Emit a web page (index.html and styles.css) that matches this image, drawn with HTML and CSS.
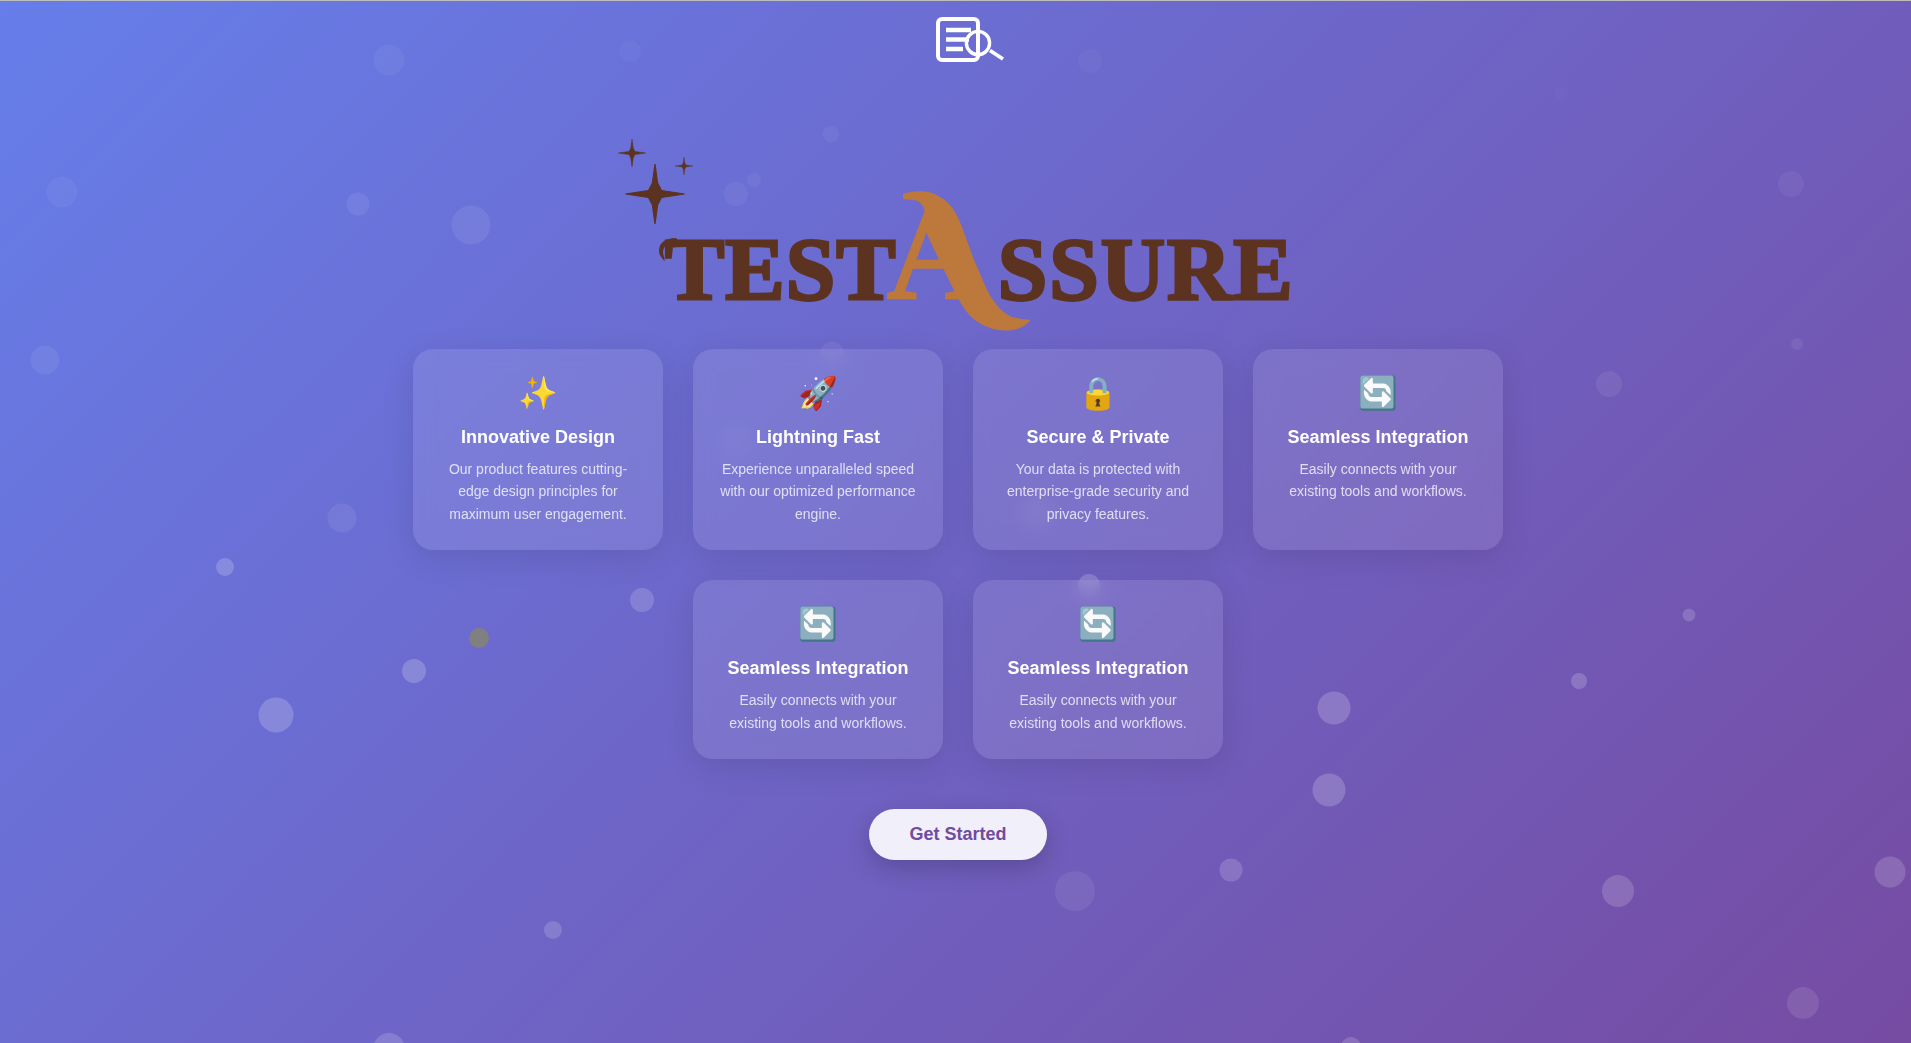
FILE: index.html
```html
<!DOCTYPE html>
<html lang="en">
<head>
<meta charset="utf-8">
<title>TestAssure</title>
<link rel="stylesheet" href="styles.css">
</head>
<body>
<svg class="bubbles" viewBox="0 0 1911 1043" aria-hidden="true">
  <g class="b02"><circle cx="1561" cy="93" r="7"/></g>
  <g class="b04"><circle cx="630" cy="51" r="11"/><circle cx="1090" cy="61" r="12"/></g>
  <g class="b06"><circle cx="389" cy="60" r="15.5"/><circle cx="62" cy="192" r="15.5"/><circle cx="736" cy="194" r="12"/><circle cx="831" cy="134" r="8.5"/><circle cx="754" cy="180" r="7"/><circle cx="1791" cy="184" r="13"/></g>
  <g class="b08"><circle cx="358" cy="204" r="11.5"/><circle cx="471" cy="225" r="19.5"/><circle cx="45" cy="360" r="14.5"/><circle cx="342" cy="518" r="14.5"/><circle cx="1797" cy="344" r="6"/><circle cx="1609" cy="384" r="13"/><circle cx="1075" cy="891" r="20"/><circle cx="737" cy="440" r="12"/><circle cx="1036" cy="512" r="14"/><circle cx="832" cy="354" r="12"/></g>
  <g class="b12"><circle cx="1803" cy="1003" r="16"/></g>
  <g class="b18"><circle cx="642" cy="600" r="12"/><circle cx="553" cy="930" r="9"/><circle cx="1618" cy="891" r="16"/><circle cx="1890" cy="872" r="15.5"/><circle cx="1231" cy="870" r="11.5"/><circle cx="1351" cy="1047" r="10"/><circle cx="389" cy="1049" r="16"/><circle cx="1689" cy="615" r="6.5"/></g>
  <g class="b20"><circle cx="225" cy="567" r="9"/><circle cx="414" cy="671" r="12"/><circle cx="276" cy="715" r="17.5"/><circle cx="1579" cy="681" r="8"/><circle cx="1334" cy="708" r="16.5"/><circle cx="1329" cy="790" r="16.5"/><circle cx="1089" cy="585" r="11"/></g>
  <circle class="grey-dot" cx="479" cy="638" r="10"/>
</svg>

<main class="page">
  <svg class="brand-icon" viewBox="0 0 68 45" aria-hidden="true">
    <rect x="2" y="2" width="40" height="41" rx="4"/>
    <path d="M10 13H35M10 22.5H33M10 32H27"/>
    <circle cx="42" cy="26" r="11.6"/>
    <path class="handle" d="M54 33.5L67 42"/>
  </svg>

  <div class="logo">
    <div class="logo-word"><span class="logo-part">TEST</span><span class="logo-a">A</span><span class="logo-part logo-part-end">SSURE</span></div>
    <svg class="logo-art" viewBox="608 132 700 217" aria-hidden="true">
      <defs>
        <path id="star" d="M0-30L2.6-11L6.5-3.5L29.5 0L6.5 3.5L2.6 11L0 30L-2.6 11L-6.5 3.5L-29.5 0L-6.5-3.5L-2.6-11Z"/>
      </defs>
      <g class="brown">
        <use class="star-shape" href="#star" transform="translate(655 194)"/>
        <use class="star-shape" href="#star" transform="translate(632 153) scale(.46)"/>
        <use class="star-shape" href="#star" transform="translate(684 166) scale(.3)"/>
        <path d="M676 238C665 238 659 243 659 251C659 255 662 259 665 261C664 257 662 252 664 248C666 244 672 243 680 243Z"/>
      </g>
      <path class="orange" d="M903 194C915 190 930 190 940 197C952 204 957 214 962 227L974 260L984 283C990 298 1000 312 1012 317C1020 319 1026 319 1030 320C1028 324 1020 329 1012 330C1000 332 985 328 975 320C966 313 960 303 948 278L942 266L933 247L926 232C928 218 925 205 918 201C912 199 905 200 903 199Z"/>
    </svg>
  </div>

  <section class="features">
    <article class="card">
      <div class="card-emoji">✨</div>
      <h3>Innovative Design</h3>
      <p>Our product features cutting-edge design principles for maximum user engagement.</p>
    </article>
    <article class="card">
      <div class="card-emoji">🚀</div>
      <h3>Lightning Fast</h3>
      <p>Experience unparalleled speed with our optimized performance engine.</p>
    </article>
    <article class="card">
      <div class="card-emoji">🔒</div>
      <h3>Secure &amp; Private</h3>
      <p>Your data is protected with enterprise-grade security and privacy features.</p>
    </article>
    <article class="card">
      <div class="card-emoji">🔄</div>
      <h3>Seamless Integration</h3>
      <p>Easily connects with your existing tools and workflows.</p>
    </article>
    <article class="card">
      <div class="card-emoji">🔄</div>
      <h3>Seamless Integration</h3>
      <p>Easily connects with your existing tools and workflows.</p>
    </article>
    <article class="card">
      <div class="card-emoji">🔄</div>
      <h3>Seamless Integration</h3>
      <p>Easily connects with your existing tools and workflows.</p>
    </article>
  </section>

  <button class="cta" type="button">Get Started</button>
</main>
</body>
</html>
```

FILE: styles.css
```css
* { box-sizing: border-box; }

html, body { margin: 0; height: 100%; }

body {
  position: relative;
  height: 1043px;
  overflow: hidden;
  border-top: 1px solid #bdbdbd;
  background: linear-gradient(135deg, #667eea 0%, #764ba2 100%);
  font-family: "Liberation Sans", Arial, "Noto Color Emoji", sans-serif;
  color: #fff;
}

.bubbles {
  position: absolute;
  left: 0;
  top: -1px;
  width: 1911px;
  height: 1043px;
}

.bubbles circle { fill: #fff; }
.b02 { opacity: .015; }
.b04 { opacity: .03; }
.b06 { opacity: .05; }
.b08 { opacity: .07; }
.b12 { opacity: .1; }
.b18 { opacity: .16; }
.b20 { opacity: .19; }
.bubbles .grey-dot { fill: #808080; }

.page {
  position: relative;
  display: flex;
  flex-direction: column;
  align-items: center;
  padding-left: 5px;
}

.brand-icon {
  display: block;
  width: 92px;
  height: 45px;
  margin-top: 16px;
  padding-left: 24px;
  fill: none;
  stroke: #fff;
  stroke-width: 4;
}

.brand-icon circle { stroke-width: 3.4; }
.brand-icon path { stroke-width: 4.4; }
.brand-icon .handle { stroke-width: 3.8; }

.logo {
  position: relative;
  width: 700px;
  height: 217px;
  margin-top: 70px;
}

.logo-word {
  display: flex;
  align-items: baseline;
  padding: 45px 0 0 57px;
  font-family: "Liberation Serif", "Times New Roman", serif;
  font-weight: 700;
  font-size: 89px;
  line-height: 150px;
  color: #5c3320;
}

.logo-part {
  letter-spacing: 1px;
  -webkit-text-stroke: 3px #5c3320;
}

.logo-part-end { letter-spacing: 2px; }

.logo-a {
  margin: 0 10px 0 -10px;
  font-size: 140px;
  color: #bd783c;
  -webkit-text-stroke: 1.5px #bd783c;
}

.logo-art {
  position: absolute;
  left: 0;
  top: 0;
  width: 700px;
  height: 217px;
}

.brown { fill: #5c3320; }
.orange { fill: #bd783c; }

.star-shape {
  stroke: #5c3320;
  stroke-width: 1.2px;
  vector-effect: non-scaling-stroke;
}

.features {
  display: flex;
  flex-wrap: wrap;
  justify-content: center;
  gap: 30px;
  width: 1090px;
}

.card {
  width: 250px;
  padding: 25px;
  border-radius: 20px;
  background: rgba(255, 255, 255, .1);
  -webkit-backdrop-filter: blur(10px);
  backdrop-filter: blur(10px);
  box-shadow: 0 8px 32px rgba(0, 0, 0, .1);
  text-align: center;
}

.card-emoji {
  font-size: 32px;
  line-height: 38px;
  margin-bottom: 14px;
}

.card h3 {
  margin: 0 0 10px;
  font-size: 18px;
  line-height: 22px;
  font-weight: 700;
}

.card p {
  margin: 0;
  font-size: 14px;
  line-height: 22.4px;
  color: rgba(255, 255, 255, .76);
}

.cta {
  margin-top: 50px;
  width: 178px;
  height: 51px;
  padding: 0;
  border: 0;
  border-radius: 26px;
  background: rgba(255, 255, 255, .9);
  box-shadow: 0 8px 25px rgba(0, 0, 0, .2);
  font-family: inherit;
  font-size: 18px;
  font-weight: 700;
  color: #704ba0;
}
```
